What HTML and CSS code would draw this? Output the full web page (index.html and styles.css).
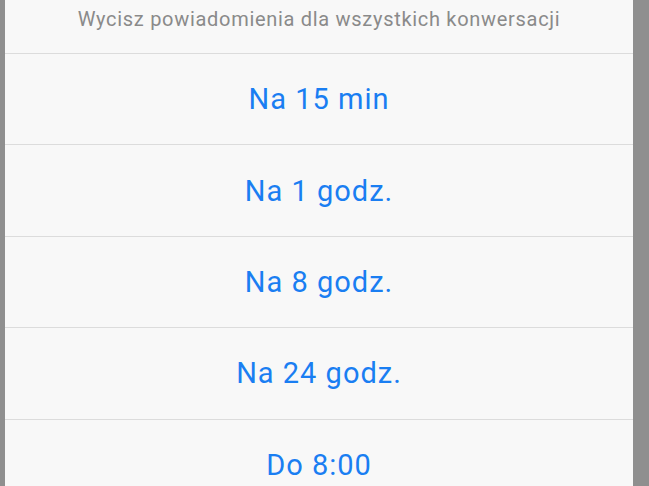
FILE: index.html
```html
<!DOCTYPE html>
<html lang="pl">
<head>
    <meta charset="utf-8" />
    <meta name="viewport" content="width=device-width, initial-scale=1.0" />
    <title>Wycisz powiadomienia</title>
    <link rel="stylesheet" href="styles.css">
</head>
<body>
    <div class="sheet">
        <div class="sheet-title">Wycisz powiadomienia dla wszystkich konwersacji</div>
        <ul class="options">
            <li class="option">Na 15 min</li>
            <li class="option">Na 1 godz.</li>
            <li class="option">Na 8 godz.</li>
            <li class="option">Na 24 godz.</li>
            <li class="option">Do 8:00</li>
        </ul>
    </div>
</body>
</html>
```

FILE: styles.css
```css
body {
    margin: 0;
    background: #8f8f8f;
    font-family: Roboto, 'Noto Sans', sans-serif;
    height: 486px;
    overflow: hidden;
}

.sheet {
    margin-left: 5px;
    width: 628px;
    background: #f8f8f8;
    min-height: 486px;
}

.sheet-title {
    height: 53px;
    box-sizing: border-box;
    padding-bottom: 15px;
    display: flex;
    align-items: center;
    justify-content: center;
    font-size: 20px;
    letter-spacing: 0.7px;
    color: #8a8a8a;
}

.options {
    list-style: none;
    margin: 0;
    padding: 0;
}

.option {
    height: 91.4px;
    box-sizing: border-box;
    border-top: 1px solid #dcdcdc;
    display: flex;
    align-items: center;
    justify-content: center;
    font-size: 29px;
    letter-spacing: 1px;
    color: #1a7ef2;
}
```
